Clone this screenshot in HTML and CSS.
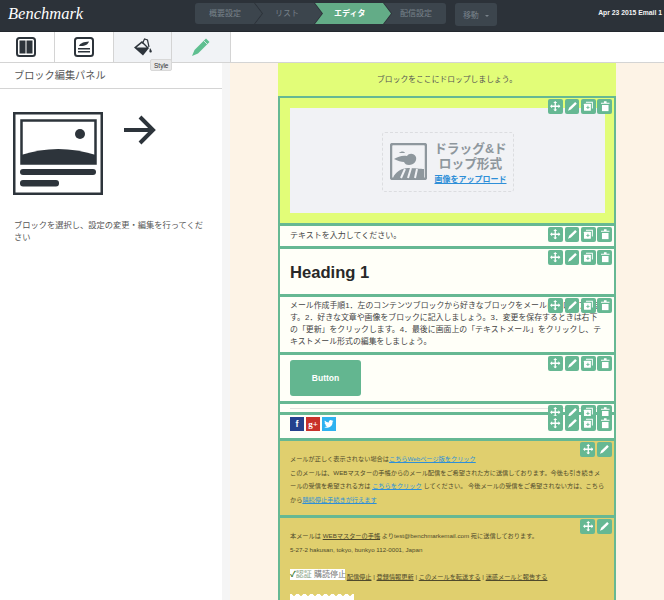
FILE: index.html
```html
<!DOCTYPE html>
<html lang="ja">
<head>
    <meta charset="UTF-8">
    <title>Benchmark Editor</title>
    <link rel="stylesheet" href="styles.css">
</head>
<body>

<svg class="sprite" width="0" height="0">
    <symbol id="i-move" viewBox="0 0 16 16">
        <path d="M8 0l3 3.200H9v3.800h3.800V5L16 8l-3.200 3V9H9v3.800h2L8 16l-3-3.200h2V9H3.200v2L0 8l3.200-3v2H7V3.200H5z" fill="#fff"/>
    </symbol>
    <symbol id="i-pencil" viewBox="0 0 16 16">
        <path d="M12.500 1.500l2.500 2.500-9 9-4.500 1.800 1.800-4.500z" fill="#fff"/>
    </symbol>
    <symbol id="i-copy" viewBox="0 0 16 16">
        <path d="M4.500 1H15v10.500h-1.500V2.500h-9z" fill="#fff"/>
        <rect x="1.500" y="4" width="10.500" height="11" rx="1" fill="#fff"/>
        <path d="M5 9h1.800V7.200h1.400V9H10v1.400H8.200v1.800H6.800v-1.800H5z" fill="#66b893"/>
    </symbol>
    <symbol id="i-trash" viewBox="0 0 16 16">
        <path d="M6 .5h4V2.500h4.500V4h-13V2.500H6z" fill="#fff"/>
        <path d="M3 6h10v9.500H3z" fill="#fff"/>
    </symbol>
</svg>

<header class="topbar">
    <div class="logo">Benchmark</div>
    <nav class="steps">
        <span class="step step-first">概要設定</span>
        <span class="step">リスト</span>
        <span class="step step-active">エディタ</span>
        <span class="step step-last">配信設定</span>
    </nav>
    <button class="move-btn">移動 <i class="caret"></i></button>
    <div class="email-name">Apr 23 2015 Email 1</div>
</header>

<div class="tabs">
    <div class="tab tab-layout">
        <svg width="20" height="20" viewBox="0 0 20 20">
            <rect x="1" y="1" width="18" height="18" rx="2.500" fill="none" stroke="#2d343b" stroke-width="2"/>
            <rect x="3.500" y="3.500" width="6" height="13" fill="#2d343b"/>
            <rect x="10.500" y="3.500" width="6" height="13" fill="#2d343b"/>
        </svg>
    </div>
    <div class="tab tab-blocks">
        <svg width="20" height="20" viewBox="0 0 20 20">
            <rect x="1" y="1" width="18" height="18" rx="2.500" fill="none" stroke="#2d343b" stroke-width="2"/>
            <path d="M5 9c1-3 5-4 10-4.500-1 3-4 5-10 4.500z" fill="#2d343b"/>
            <path d="M4 11h12v1.500H4zM4 14h12v1.500H4z" fill="#2d343b"/>
        </svg>
    </div>
    <div class="tab tab-style">
        <svg width="20" height="20" viewBox="0 0 20 20">
            <path d="M1 10.500L9 4l7 7-6 7.500z" fill="#2d343b"/>
            <path d="M3.500 10.500L9 6l4.600 4.500z" fill="#f1f3f6"/>
            <path d="M9.500 6.500l2-4.500 3 1 1.500 7" fill="none" stroke="#2d343b" stroke-width="1.200"/>
            <path d="M17 11c1 1.500 1.800 2.500 1.800 3.400 0 1.400-2.400 1.400-2.400 0 0-.9.300-2 .6-3.400z" fill="#2d343b"/>
        </svg>
    </div>
    <div class="tab tab-edit">
        <svg width="20" height="20" viewBox="0 0 20 20">
            <path d="M15 1.500l3.500 3.500L7 16.500l-6 2.500 2.500-6z" fill="#5fbf90"/>
            <path d="M12.800 3.800l3.400 3.400" stroke="#f1f3f6" stroke-width=".8"/>
        </svg>
    </div>
    <div class="tooltip">Style</div>
</div>

<div class="workspace">
    <aside class="sidebar">
        <h2 class="panel-title">ブロック編集パネル</h2>
        <div class="hint-art">
            <svg width="90" height="83" viewBox="0 0 90 83">
                <rect x="1.250" y="1.250" width="87.500" height="80.500" fill="none" stroke="#2d343b" stroke-width="2.500"/>
                <rect x="8.500" y="8.500" width="74" height="43" fill="none" stroke="#2d343b" stroke-width="2.500"/>
                <circle cx="67" cy="22" r="5" fill="#2d343b"/>
                <path d="M8 43Q45 31 83 43v9H8z" fill="#2d343b"/>
                <rect x="7" y="57" width="76" height="6" rx="3" fill="#2d343b"/>
                <rect x="7" y="68" width="39" height="6.500" rx="3" fill="#2d343b"/>
            </svg>
            <svg class="hint-arrow" width="32" height="30" viewBox="0 0 32 30">
                <path d="M0 15h28M16 2l13 13-13 13" fill="none" stroke="#2d343b" stroke-width="4"/>
            </svg>
        </div>
        <p class="hint-text">ブロックを選択し、設定の変更・編集を行ってください</p>
    </aside>

    <main class="canvas">
        <div class="sheet">
            <div class="dropzone">ブロックをここにドロップしましょう。</div>

            <section class="block block-image">
                <div class="tools">
                    <span class="tool"><svg><use href="#i-move"/></svg></span>
                    <span class="tool"><svg><use href="#i-pencil"/></svg></span>
                    <span class="tool"><svg><use href="#i-copy"/></svg></span>
                    <span class="tool"><svg><use href="#i-trash"/></svg></span>
                </div>
                <div class="image-holder">
                    <div class="upload">
                        <svg width="37" height="37" viewBox="0 0 37 37">
                            <rect x="1" y="1" width="35" height="35" rx="2" fill="none" stroke="#8e979d" stroke-width="2.500"/>
                            <path d="M4 16c4-2 8-4 13-3 2-3 7-3 9 1 1 4-2 8-7 8-3 0-4-1-5-3-3 0-6-1-10-3z" fill="#8e979d"/>
                            <path d="M9 10c2-2 5-2 6 0z" fill="#8e979d"/>
                            <path d="M3 35c2-6 9-10 15-10s13 1 16 1v9z" fill="#8e979d"/>
                            <path d="M11 35l4-9M18 35l3-10M25 35l2-9" stroke="#f1f2f5" stroke-width="2"/>
                        </svg>
                        <div class="upload-text">
                            <div class="upload-title">ドラッグ&amp;ドロップ形式</div>
                            <a class="upload-link">画像をアップロード</a>
                        </div>
                    </div>
                </div>
            </section>

            <section class="block block-text">
                <div class="tools">
                    <span class="tool"><svg><use href="#i-move"/></svg></span>
                    <span class="tool"><svg><use href="#i-pencil"/></svg></span>
                    <span class="tool"><svg><use href="#i-copy"/></svg></span>
                    <span class="tool"><svg><use href="#i-trash"/></svg></span>
                </div>
                テキストを入力してください。
            </section>

            <section class="block block-heading">
                <div class="tools">
                    <span class="tool"><svg><use href="#i-move"/></svg></span>
                    <span class="tool"><svg><use href="#i-pencil"/></svg></span>
                    <span class="tool"><svg><use href="#i-copy"/></svg></span>
                    <span class="tool"><svg><use href="#i-trash"/></svg></span>
                </div>
                <h1>Heading 1</h1>
            </section>

            <section class="block block-para">
                <div class="tools">
                    <span class="tool"><svg><use href="#i-move"/></svg></span>
                    <span class="tool"><svg><use href="#i-pencil"/></svg></span>
                    <span class="tool"><svg><use href="#i-copy"/></svg></span>
                    <span class="tool"><svg><use href="#i-trash"/></svg></span>
                </div>
                メール作成手順1．左のコンテンツブロックから好きなブロックをメールにドロップします。2．好きな文章や画像をブロックに記入しましょう。3．変更を保存するときは右下の「更新」をクリックします。4．最後に画面上の「テキストメール」をクリックし、テキストメール形式の編集をしましょう。
            </section>

            <section class="block block-button">
                <div class="tools">
                    <span class="tool"><svg><use href="#i-move"/></svg></span>
                    <span class="tool"><svg><use href="#i-pencil"/></svg></span>
                    <span class="tool"><svg><use href="#i-copy"/></svg></span>
                    <span class="tool"><svg><use href="#i-trash"/></svg></span>
                </div>
                <a class="mail-btn">Button</a>
            </section>

            <section class="block block-divider">
                <div class="tools">
                    <span class="tool"><svg><use href="#i-move"/></svg></span>
                    <span class="tool"><svg><use href="#i-pencil"/></svg></span>
                    <span class="tool"><svg><use href="#i-copy"/></svg></span>
                    <span class="tool"><svg><use href="#i-trash"/></svg></span>
                </div>
                <hr>
            </section>

            <section class="block block-social">
                <div class="tools">
                    <span class="tool"><svg><use href="#i-move"/></svg></span>
                    <span class="tool"><svg><use href="#i-pencil"/></svg></span>
                    <span class="tool"><svg><use href="#i-copy"/></svg></span>
                    <span class="tool"><svg><use href="#i-trash"/></svg></span>
                </div>
                <span class="social social-fb">f</span>
                <span class="social social-gp">g+</span>
                <span class="social social-tw">
                    <svg width="10" height="10" viewBox="0 0 24 24"><path d="M23 5c-.8.400-1.700.600-2.600.700.900-.600 1.600-1.400 2-2.500-.900.500-1.900.900-2.900 1.100A4.600 4.600 0 0 0 11.600 8.500C7.800 8.300 4.400 6.500 2.100 3.700c-1.200 2.100-.600 4.800 1.400 6.100-.700 0-1.400-.200-2-.600 0 2.200 1.500 4.200 3.700 4.600-.700.200-1.400.200-2.100.100.600 1.800 2.300 3.200 4.300 3.200A9.300 9.300 0 0 1 .5 19a13 13 0 0 0 20-11.600c.900-.600 1.700-1.400 2.500-2.400z" fill="#fff"/></svg>
                </span>
            </section>

            <section class="block block-footer">
                <div class="tools">
                    <span class="tool tool-big"><svg><use href="#i-move"/></svg></span>
                    <span class="tool tool-big"><svg><use href="#i-pencil"/></svg></span>
                </div>
                <p>メールが正しく表示されない場合は<a class="link-blue">こちらWebページ版をクリック</a></p>
                <p>このメールは、WEBマスターの手帳からのメール配信をご希望された方に送信しております。今後も引き続きメールの受信を希望される方は <a class="link-blue">こちらをクリック</a> してください。 今後メールの受信をご希望されない方は、こちらから<a class="link-blue">購読停止手続きが行えます</a></p>
            </section>

            <section class="block block-footer block-address">
                <div class="tools">
                    <span class="tool tool-big"><svg><use href="#i-move"/></svg></span>
                    <span class="tool tool-big"><svg><use href="#i-pencil"/></svg></span>
                </div>
                <p>本メールは <a class="link-dark">WEBマスターの手帳</a> よりtest@benchmarkemail.com 宛に送信しております。</p>
                <p>5-27-2 hakusan, tokyo, bunkyo 112-0001, Japan</p>
                <p class="address-links">
                    <span class="verified"><b>✓</b><em>認証</em> 購読停止</span>
                    <a class="link-dark">配信停止</a> | <a class="link-dark">登録情報更新</a> | <a class="link-dark">このメールを転送する</a> | <a class="link-dark">迷惑メールと報告する</a>
                </p>
                <div class="stamp"></div>
            </section>
        </div>
    </main>
</div>

</body>
</html>
```

FILE: styles.css
```css
* { box-sizing: border-box; }
html, body { margin: 0; padding: 0; height: 600px; overflow: hidden; }
body { font-family: "Liberation Sans", "Noto Sans CJK JP", sans-serif; color: #444; background: #fff; }
.sprite { display: block; height: 0; }

/* top bar */
.topbar { display: flex; align-items: flex-start; height: 32px; background: #2c3239; position: relative; border-bottom: 1px solid #23282e; }
.logo { width: 195px; padding: 4px 0 0 8px; font-family: "Liberation Serif", serif; font-style: italic; font-size: 16.500px; line-height: 20px; color: #fff; }
.steps { display: flex; margin-top: 3px; flex-shrink: 0; }
.step { height: 21px; line-height: 21px; padding-left: 20px; margin-right: -7px; width: 67px; font-size: 8px; color: #78828a; background: #3c454d; clip-path: polygon(0 0, calc(100% - 8px) 0, 100% 50%, calc(100% - 8px) 100%, 0 100%, 8px 50%); white-space: nowrap; }
.step-first { padding-left: 14px; border-radius: 3px 0 0 3px; clip-path: polygon(0 0, calc(100% - 8px) 0, 100% 50%, calc(100% - 8px) 100%, 0 100%); }
.step-active { width: 76px; background: #63ac87; color: #fff; font-weight: bold; padding-left: 19px; }
.step-last { width: 62px; margin-right: 0; padding-left: 16px; border-radius: 0 3px 3px 0; clip-path: polygon(0 0, 100% 0, 100% 100%, 0 100%, 8px 50%); }
.move-btn { margin: 3px 0 0 9px; width: 42px; height: 23px; border: 0; border-radius: 3px; background: #3c454d; color: #78828a; font: 8px "Liberation Sans", "Noto Sans CJK JP", sans-serif; padding: 0; }
.caret { display: inline-block; margin-left: 4px; vertical-align: middle; border: 2px solid transparent; border-top-color: #78828a; border-bottom: 0; }
.email-name { margin-left: auto; padding-top: 8px; padding-right: 2px; font-size: 6.800px; font-weight: bold; line-height: 9px; color: #f2f3f4; white-space: nowrap; }

/* tabs */
.tabs { display: flex; height: 31px; border-bottom: 1px solid #d4d4d4; position: relative; }
.tab { display: flex; align-items: center; justify-content: center; height: 30px; border-right: 1px solid #d4d4d4; }
.tab-layout { width: 55px; padding-right: 3px; }
.tab-blocks { width: 59px; }
.tab-style { width: 58px; background: #f1f3f6; }
.tab-edit { width: 59px; background: #f1f3f6; }
.tooltip { position: absolute; left: 150px; top: 27px; padding: 0 3px; height: 12px; line-height: 11px; font-size: 6.500px; color: #333; background: #e9e9e9; border: 1px solid #d8d8d8; border-radius: 2px; }

/* sidebar */
.workspace { display: flex; height: 537px; }
.sidebar { width: 230px; height: 537px; border-right: 8px solid #f5f5f5; }
.panel-title { margin: 0; height: 26px; padding-left: 14px; line-height: 25px; font-size: 10.200px; font-weight: normal; color: #555; border-bottom: 1px solid #d4d4d4; }
.hint-art { display: flex; align-items: flex-start; padding: 23px 0 0 13px; }
.hint-arrow { margin: 3px 0 0 21px; }
.hint-text { margin: 25px 17px 0 14px; font-size: 8.250px; line-height: 12px; color: #555; }

/* email canvas */
.canvas { flex: 1; background: #fdf3e6; padding-left: 48px; overflow: hidden; }
.sheet { width: 338px; background: #e2fd78; }
.dropzone { height: 33px; line-height: 33px; text-align: center; font-size: 7.800px; color: #555; }
.block { position: relative; border: 2px solid #66b893; padding: 0 9px 0 10px; margin-bottom: -1px; font-size: 8px; color: #444; background: #fffff8; }
.tools { position: absolute; right: 2px; top: 1px; display: flex; gap: 1.700px; z-index: 2; }
.tool { display: block; width: 14.700px; height: 15px; padding: 2.250px; border-radius: 2px; background: #66b893; }
.tool svg { display: block; width: 10.500px; height: 10.500px; }
.tool-big { width: 15px; }

.block-image { height: 129px; background: #e2fd78; padding-top: 10px; }
.image-holder { height: 105px; background: #f1f2f5; display: flex; align-items: center; justify-content: center; }
.upload { display: flex; align-items: center; gap: 8px; width: 132px; height: 60px; padding-left: 7px; border: 1px dashed #dcdde0; border-radius: 3px; margin-top: 2px; }
.upload-text { width: 72px; text-align: center; padding-top: 3px; }
.upload-title { margin: 0 -1px; font-size: 12.700px; line-height: 15px; font-weight: bold; color: #8e979d; word-break: break-all; }
.upload-link { display: block; margin-top: 3px; font-size: 8px; line-height: 10px; font-weight: bold; color: #2e8fd8; text-decoration: underline; }

.block-text { height: 24px; line-height: 20px; }
.block-heading { height: 49px; }
.block-heading h1 { margin: 13px 0 0; font-size: 16.600px; line-height: 21px; font-weight: bold; color: #282828; }
.block-para { height: 59px; padding-top: 3px; font-size: 7.900px; line-height: 12px; }
.block-button { height: 50px; padding-top: 5px; }
.mail-btn { display: block; width: 71px; height: 36px; line-height: 36px; text-align: center; border-radius: 3px; background: #63b690; color: #fff; font-size: 8.500px; font-weight: bold; }
.block-divider { height: 12px; }
.block-divider hr { margin: 4px 0 0; height: 1px; border: 0; background: #e4e4e0; }
.block-social { height: 27px; margin-top: -1px; display: flex; gap: 2px; padding-top: 2px; }
.social { display: flex; align-items: center; justify-content: center; width: 14px; height: 14px; color: #fff; font-size: 9px; font-weight: bold; }
.social-fb { background: #25418d; }
.social-gp { background: #c8322a; font-family: "Liberation Serif", serif; }
.social-tw { background: #2fb2f0; }

.block-footer { height: 78px; padding-top: 11px; background: #e0cf6e; font-size: 6.200px; color: #4f4a2c; }
.block-footer p { margin: 0; line-height: 13.600px; }
.link-blue { color: #2e8fd8; text-decoration: underline; }
.link-dark { color: #4f4a2c; text-decoration: underline; }
.block-address { height: 90px; }
.address-links { margin-top: 13px !important; white-space: nowrap; }
.verified { display: inline-block; width: 55px; height: 11px; line-height: 11px; font-size: 8px; background: #fff; color: #777; vertical-align: 2px; }
.verified b { color: #3b7a2a; }
.verified em { font-style: normal; color: #8aa58a; }
.stamp { width: 64px; height: 10px; margin-top: 10px; background: radial-gradient(circle at 4px 0, transparent 1.500px, #fff 2px) repeat-x; background-size: 7px 10px; }
```
